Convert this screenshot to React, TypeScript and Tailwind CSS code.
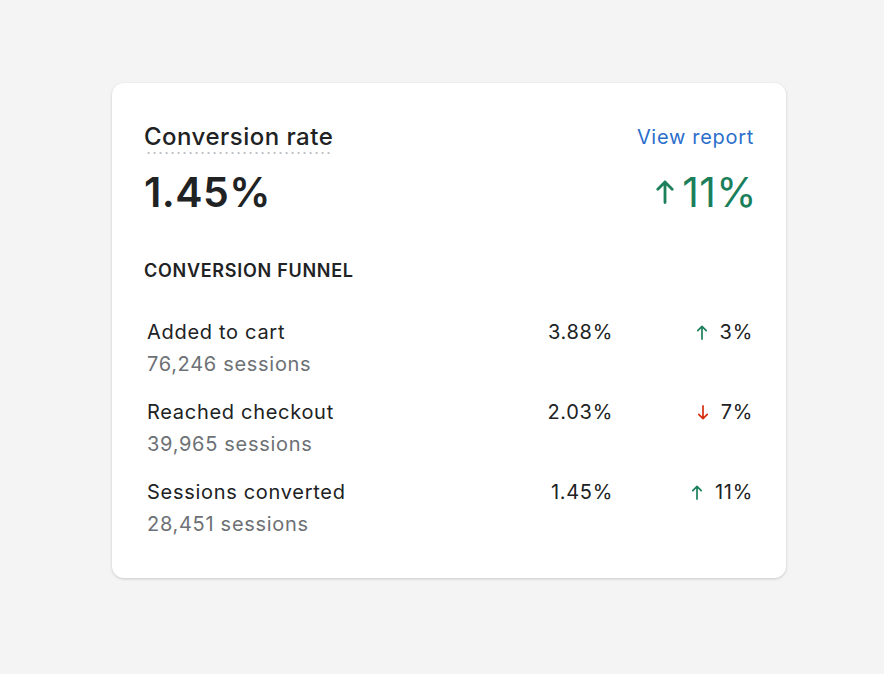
import React from 'react';

type Dir = 'up' | 'down';

interface FunnelRow {
  label: string;
  sessions: string;
  rate: string;
  change: string;
  dir: Dir;
}

const rows: FunnelRow[] = [
  { label: 'Added to cart', sessions: '76,246 sessions', rate: '3.88%', change: '3%', dir: 'up' },
  { label: 'Reached checkout', sessions: '39,965 sessions', rate: '2.03%', change: '7%', dir: 'down' },
  { label: 'Sessions converted', sessions: '28,451 sessions', rate: '1.45%', change: '11%', dir: 'up' },
];

function Arrow({ dir, className }: { dir: Dir; className?: string }) {
  return (
    <svg viewBox="0 0 12 16" fill="none" className={className}>
      {dir === 'up' ? (
        <path d="M6 15V1.5M1.5 6L6 1.5L10.5 6" stroke="currentColor" strokeWidth="1.8" strokeLinecap="round" strokeLinejoin="round" />
      ) : (
        <path d="M6 1V14.5M1.5 10L6 14.5L10.5 10" stroke="currentColor" strokeWidth="1.8" strokeLinecap="round" strokeLinejoin="round" />
      )}
    </svg>
  );
}

function BigArrowUp({ className }: { className?: string }) {
  return (
    <svg viewBox="0 0 18 24" fill="none" className={className}>
      <path d="M9 22.5V2M1.8 9.2L9 2L16.2 9.2" stroke="currentColor" strokeWidth="2.8" strokeLinecap="round" strokeLinejoin="round" />
    </svg>
  );
}

export default function App() {
  return (
    <div className="min-h-screen bg-[#f4f4f4] pt-[83px] pl-[112px] font-['Inter',sans-serif]">
      <div className="w-[674px] rounded-xl bg-white shadow-[0_1px_3px_rgba(0,0,0,0.18)] px-8 pt-[38px] pb-[38px] text-[#202223]">
        <div className="flex items-start justify-between">
          <h2 className="text-2xl leading-8 font-medium tracking-[0.02em] pb-[1px] bg-[radial-gradient(circle,#bfc4ca_1px,transparent_1.5px)] bg-[length:6px_2px] bg-repeat-x bg-bottom">
            Conversion rate
          </h2>
          <a className="text-xl leading-8 tracking-[0.035em] text-[#2c6ecb]">View report</a>
        </div>

        <div className="mt-[14px] flex items-center justify-between">
          <p className="text-[41px] leading-[48px] font-semibold tracking-[0.01em]">1.45%</p>
          <p className="-mr-[3px] flex items-center gap-[8px] text-[41px] leading-[48px] tracking-[0.01em] text-[#1a7f5a]">
            <BigArrowUp className="h-6 w-[18px]" />
            11%
          </p>
        </div>

        <h3 className="mt-[43px] text-lg leading-6 font-semibold tracking-[0.04em] uppercase">Conversion funnel</h3>

        <div className="mt-[33px] flex flex-col gap-4">
          {rows.map((r) => (
            <div key={r.label} className="flex items-start pl-[3px] pr-[1px] text-xl leading-8 tracking-[0.035em]">
              <div className="flex-1">
                <p>{r.label}</p>
                <p className="text-[#6d7175]">{r.sessions}</p>
              </div>
              <p className="w-24 text-right">{r.rate}</p>
              <p className="w-[140px] flex items-center justify-end gap-3">
                <Arrow
                  dir={r.dir}
                  className={r.dir === 'up' ? 'h-[15px] w-3 text-[#1a7f5a]' : 'h-[15px] w-3 text-[#d72c0d]'}
                />
                {r.change}
              </p>
            </div>
          ))}
        </div>
      </div>
    </div>
  );
}
